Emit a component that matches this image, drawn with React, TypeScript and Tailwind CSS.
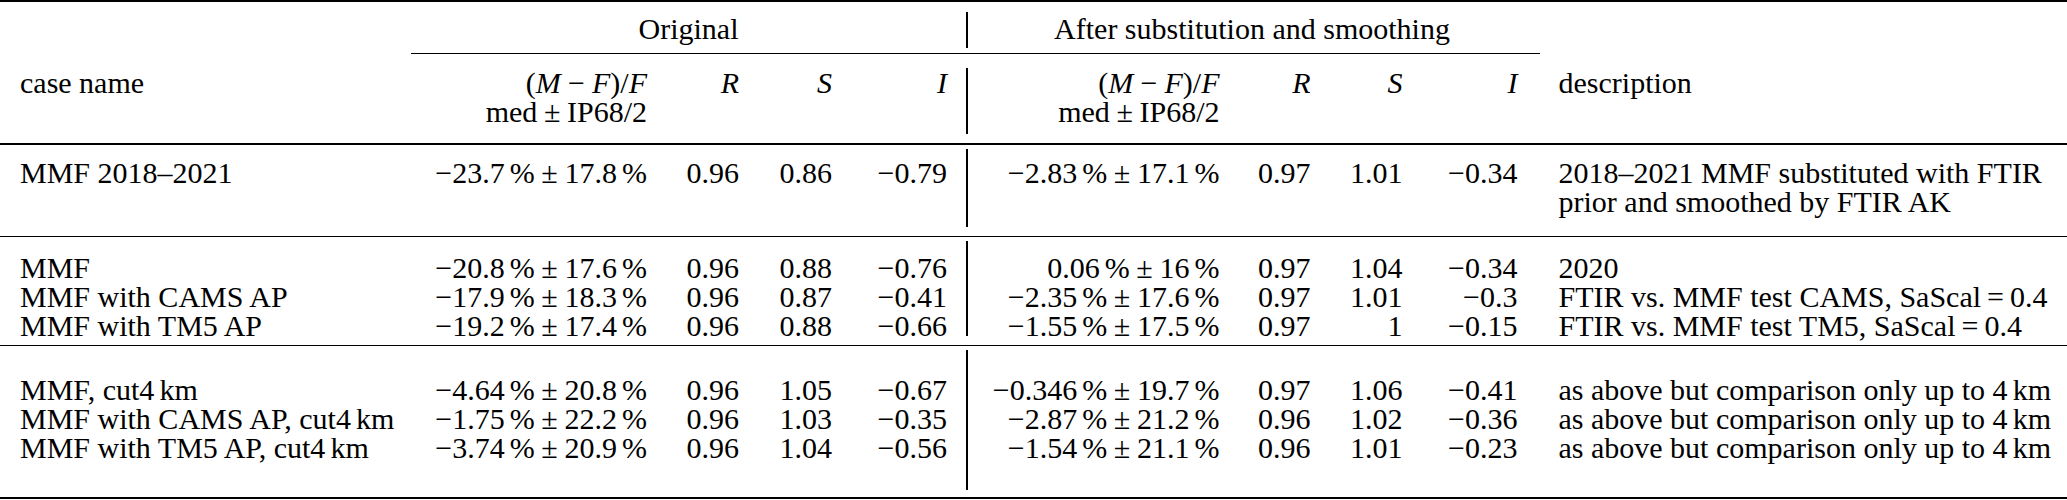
import React from "react";

const M = "\u2212";

function Pct({ a, b }: { a: string; b: string }) {
  return (
    <span className="whitespace-nowrap">
      {a}
      <span className="ml-[0.17em]">%</span>
      <span className="mx-[0.22em]">±</span>
      {b}
      <span className="ml-[0.17em]">%</span>
    </span>
  );
}

function Km({ pre }: { pre: string }) {
  return (
    <>
      {pre}
      <span className="ml-[0.17em]">km</span>
    </>
  );
}

type Row = {
  name: React.ReactNode;
  o: [string, string];
  oR: string;
  oS: string;
  oI: string;
  a: [string, string];
  aR: string;
  aS: string;
  aI: string;
  desc: React.ReactNode;
};

const SaScal = (t: string) => (
  <>
    FTIR vs. MMF test {t}, SaScal<span className="mx-[0.2em]">=</span>0.4
  </>
);

const group1: Row[] = [
  {
    name: "MMF 2018–2021",
    o: [`${M}23.7`, "17.8"],
    oR: "0.96",
    oS: "0.86",
    oI: `${M}0.79`,
    a: [`${M}2.83`, "17.1"],
    aR: "0.97",
    aS: "1.01",
    aI: `${M}0.34`,
    desc: (
      <>
        2018–2021 MMF substituted with FTIR
        <br />
        prior and smoothed by FTIR AK
      </>
    ),
  },
];

const group2: Row[] = [
  {
    name: "MMF",
    o: [`${M}20.8`, "17.6"],
    oR: "0.96",
    oS: "0.88",
    oI: `${M}0.76`,
    a: ["0.06", "16"],
    aR: "0.97",
    aS: "1.04",
    aI: `${M}0.34`,
    desc: "2020",
  },
  {
    name: "MMF with CAMS AP",
    o: [`${M}17.9`, "18.3"],
    oR: "0.96",
    oS: "0.87",
    oI: `${M}0.41`,
    a: [`${M}2.35`, "17.6"],
    aR: "0.97",
    aS: "1.01",
    aI: `${M}0.3`,
    desc: SaScal("CAMS"),
  },
  {
    name: "MMF with TM5 AP",
    o: [`${M}19.2`, "17.4"],
    oR: "0.96",
    oS: "0.88",
    oI: `${M}0.66`,
    a: [`${M}1.55`, "17.5"],
    aR: "0.97",
    aS: "1",
    aI: `${M}0.15`,
    desc: SaScal("TM5"),
  },
];

const asAbove = <Km pre="as above but comparison only up to 4" />;

const group3: Row[] = [
  {
    name: <Km pre="MMF, cut4" />,
    o: [`${M}4.64`, "20.8"],
    oR: "0.96",
    oS: "1.05",
    oI: `${M}0.67`,
    a: [`${M}0.346`, "19.7"],
    aR: "0.97",
    aS: "1.06",
    aI: `${M}0.41`,
    desc: asAbove,
  },
  {
    name: <Km pre="MMF with CAMS AP, cut4" />,
    o: [`${M}1.75`, "22.2"],
    oR: "0.96",
    oS: "1.03",
    oI: `${M}0.35`,
    a: [`${M}2.87`, "21.2"],
    aR: "0.96",
    aS: "1.02",
    aI: `${M}0.36`,
    desc: asAbove,
  },
  {
    name: <Km pre="MMF with TM5 AP, cut4" />,
    o: [`${M}3.74`, "20.9"],
    oR: "0.96",
    oS: "1.04",
    oI: `${M}0.56`,
    a: [`${M}1.54`, "21.1"],
    aR: "0.96",
    aS: "1.01",
    aI: `${M}0.23`,
    desc: asAbove,
  },
];

const LEFT = "grid grid-cols-[411px_255px_92px_93px_115px] content-start shrink-0";
const RIGHT = "grid grid-cols-[271px_91px_92px_115px_1fr] content-start flex-1";
const cR = "px-[19px] text-right whitespace-nowrap";
const cName = "pl-[20px] pr-[19px] text-left whitespace-nowrap";
const cDesc = "pl-[22px] pr-[10px] text-left whitespace-nowrap";
const BAR = "w-[1.5px] bg-black shrink-0";

function Left({ rows }: { rows: Row[] }) {
  return (
    <>
      {rows.map((r, i) => (
        <React.Fragment key={i}>
          <div className={cName}>{r.name}</div>
          <div className={cR}>
            <Pct a={r.o[0]} b={r.o[1]} />
          </div>
          <div className={cR}>{r.oR}</div>
          <div className={cR}>{r.oS}</div>
          <div className={cR}>{r.oI}</div>
        </React.Fragment>
      ))}
    </>
  );
}

function Right({ rows }: { rows: Row[] }) {
  return (
    <>
      {rows.map((r, i) => (
        <React.Fragment key={i}>
          <div className={cR}>
            <Pct a={r.a[0]} b={r.a[1]} />
          </div>
          <div className={cR}>{r.aR}</div>
          <div className={cR}>{r.aS}</div>
          <div className={cR}>{r.aI}</div>
          <div className={cDesc}>{r.desc}</div>
        </React.Fragment>
      ))}
    </>
  );
}

function MF() {
  return (
    <span className="whitespace-nowrap">
      (<i>M</i>
      <span className="mx-[0.24em]">{M}</span>
      <i>F</i>)/<i>F</i>
    </span>
  );
}

function MedIP() {
  return (
    <span className="whitespace-nowrap">
      med<span className="mx-[0.22em]">±</span>IP68/2
    </span>
  );
}

export default function App() {
  return (
    <div className="w-[2067px] h-[500px] bg-white text-black text-[30px] leading-[29px] overflow-hidden font-['Liberation_Serif','Times_New_Roman',serif]">
      {/* top rule */}
      <div className="h-[2px] bg-black" />

      {/* group header row */}
      <div className="flex">
        <div className={`${LEFT} pt-[12px] pb-[9.5px]`}>
          <div />
          <div className="col-span-4 text-center">Original</div>
        </div>
        <div className={`${BAR} mt-[10px] mb-[5px]`} />
        <div className={`${RIGHT} pt-[12px] pb-[9.5px]`}>
          <div className="col-span-4 text-center whitespace-nowrap">After substitution and smoothing</div>
          <div />
        </div>
      </div>

      {/* cmidrule */}
      <div className="flex">
        <div className="w-[411px] shrink-0" />
        <div className="w-[1129px] h-[1.5px] bg-black" />
      </div>

      {/* column header row */}
      <div className="flex">
        <div className={`${LEFT} pt-[13.5px] pb-[17.5px]`}>
          <div className={cName}>case name</div>
          <div className={cR}>
            <MF />
            <br />
            <MedIP />
          </div>
          <div className={cR}>
            <i>R</i>
          </div>
          <div className={cR}>
            <i>S</i>
          </div>
          <div className={cR}>
            <i>I</i>
          </div>
        </div>
        <div className={`${BAR} mt-[14px] mb-[9px]`} />
        <div className={`${RIGHT} pt-[13.5px] pb-[17.5px]`}>
          <div className={cR}>
            <MF />
            <br />
            <MedIP />
          </div>
          <div className={cR}>
            <i>R</i>
          </div>
          <div className={cR}>
            <i>S</i>
          </div>
          <div className={cR}>
            <i>I</i>
          </div>
          <div className={cDesc}>description</div>
        </div>
      </div>

      <div className="h-[1.5px] bg-black" />

      {/* group 1 */}
      <div className="flex">
        <div className={`${LEFT} pt-[13px] pb-[20px]`}>
          <Left rows={group1} />
        </div>
        <div className={`${BAR} mt-[4px] mb-[9px]`} />
        <div className={`${RIGHT} pt-[13px] pb-[20px]`}>
          <Right rows={group1} />
        </div>
      </div>

      <div className="h-[1.5px] bg-black" />

      {/* group 2 */}
      <div className="flex">
        <div className={`${LEFT} pt-[15.5px] pb-[5px]`}>
          <Left rows={group2} />
        </div>
        <div className={`${BAR} mt-[4px] mb-[9px]`} />
        <div className={`${RIGHT} pt-[15.5px] pb-[5px]`}>
          <Right rows={group2} />
        </div>
      </div>

      <div className="h-[1.5px] bg-black" />

      {/* group 3 */}
      <div className="flex">
        <div className={`${LEFT} pt-[28.5px] pb-[35px]`}>
          <Left rows={group3} />
        </div>
        <div className={`${BAR} mt-[4px] mb-[7px]`} />
        <div className={`${RIGHT} pt-[28.5px] pb-[35px]`}>
          <Right rows={group3} />
        </div>
      </div>

      {/* bottom rule */}
      <div className="h-[2px] bg-black" />
    </div>
  );
}
